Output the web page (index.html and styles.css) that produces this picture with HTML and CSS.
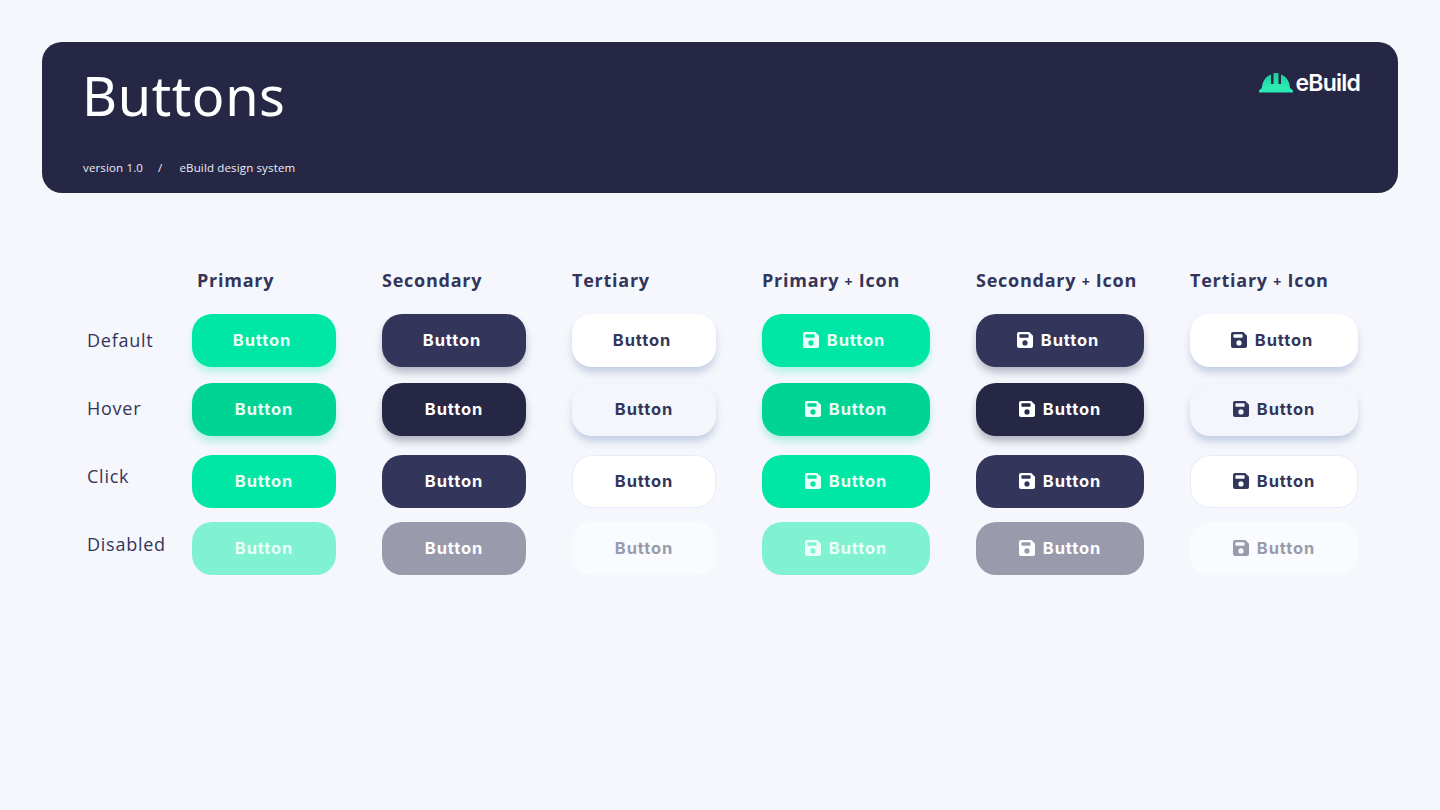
FILE: index.html
```html
<!DOCTYPE html>
<html lang="en">
<head>
<meta charset="utf-8">
<title>Buttons</title>
<link rel="stylesheet" href="styles.css">
</head>
<body>
<svg class="sprite" width="0" height="0" aria-hidden="true">
  <symbol id="save" viewBox="0 0 16 16">
    <path fill-rule="evenodd" d="M2 0H12.2L16 3.8V14a2 2 0 0 1-2 2H2a2 2 0 0 1-2-2V2a2 2 0 0 1 2-2ZM3.2 2.2a.8.8 0 0 0-.8.8V5a.8.8 0 0 0 .8.8H10.8a.8.8 0 0 0 .8-.8V3a.8.8 0 0 0-.8-.8ZM8 8.3a2.6 2.6 0 1 0 0 5.2a2.6 2.6 0 0 0 0-5.2Z"/>
  </symbol>
</svg>
<header class="banner">
  <div class="banner-main">
    <h1 class="title">Buttons</h1>
    <p class="crumbs"><span>version 1.0</span><span class="slash">/</span><span>eBuild design system</span></p>
  </div>
  <div class="logo">
    <svg class="logo-mark" viewBox="0 0 34 20" width="34" height="20" aria-hidden="true">
      <defs><linearGradient id="hat" x1="0" y1="0" x2="0" y2="1"><stop offset="0" stop-color="#1bc9a0"/><stop offset="1" stop-color="#2eeeb5"/></linearGradient></defs>
      <path fill="url(#hat)" d="M3 15.500C3 9 6.500 3.500 12 1.500V11H14.500V.2L15.500 0H18.500L19.500 .2V11H22V1.500C27.500 3.500 31 9 31 15.500Z"/>
      <path fill="#2ce8b2" d="M3 15H31L33.500 17A1.300 1.300 0 0 1 32.700 19.500H1.300A1.300 1.300 0 0 1 .5 17Z"/>
    </svg>
    <span class="logo-text">eBuild</span>
  </div>
</header>
<main class="matrix">
  <div class="states">
    <div>Default</div>
    <div>Hover</div>
    <div>Click</div>
    <div>Disabled</div>
  </div>
  <section class="col">
    <h2 class="col-title col-title-first">Primary</h2>
    <button class="btn primary s-default">Button</button>
    <button class="btn primary s-hover">Button</button>
    <button class="btn primary s-click">Button</button>
    <button class="btn primary s-disabled">Button</button>
  </section>
  <section class="col">
    <h2 class="col-title">Secondary</h2>
    <button class="btn secondary s-default">Button</button>
    <button class="btn secondary s-hover">Button</button>
    <button class="btn secondary s-click">Button</button>
    <button class="btn secondary s-disabled">Button</button>
  </section>
  <section class="col">
    <h2 class="col-title">Tertiary</h2>
    <button class="btn tertiary s-default">Button</button>
    <button class="btn tertiary s-hover">Button</button>
    <button class="btn tertiary s-click">Button</button>
    <button class="btn tertiary s-disabled">Button</button>
  </section>
  <section class="col wide">
    <h2 class="col-title">Primary <small>+</small> Icon</h2>
    <button class="btn primary s-default"><svg class="ico"><use href="#save"/></svg>Button</button>
    <button class="btn primary s-hover"><svg class="ico"><use href="#save"/></svg>Button</button>
    <button class="btn primary s-click"><svg class="ico"><use href="#save"/></svg>Button</button>
    <button class="btn primary s-disabled"><svg class="ico"><use href="#save"/></svg>Button</button>
  </section>
  <section class="col wide">
    <h2 class="col-title">Secondary <small>+</small> Icon</h2>
    <button class="btn secondary s-default"><svg class="ico"><use href="#save"/></svg>Button</button>
    <button class="btn secondary s-hover"><svg class="ico"><use href="#save"/></svg>Button</button>
    <button class="btn secondary s-click"><svg class="ico"><use href="#save"/></svg>Button</button>
    <button class="btn secondary s-disabled"><svg class="ico"><use href="#save"/></svg>Button</button>
  </section>
  <section class="col wide">
    <h2 class="col-title">Tertiary <small>+</small> Icon</h2>
    <button class="btn tertiary s-default"><svg class="ico"><use href="#save"/></svg>Button</button>
    <button class="btn tertiary s-hover"><svg class="ico"><use href="#save"/></svg>Button</button>
    <button class="btn tertiary s-click"><svg class="ico"><use href="#save"/></svg>Button</button>
    <button class="btn tertiary s-disabled"><svg class="ico"><use href="#save"/></svg>Button</button>
  </section>
</main>
</body>
</html>
```
FILE: styles.css
```css
* { box-sizing: border-box; }
html, body { margin: 0; height: 100%; overflow: hidden; }
body {
  background: #f5f7fc;
  padding: 42px 42px 0;
  font-family: "Open Sans", "Noto Sans", sans-serif;
  color: #33355a;
}
.sprite { position: absolute; }
.banner {
  height: 151px;
  background: #252745;
  border-radius: 20px;
  color: #fff;
  padding: 0 38px 0 40px;
  display: flex;
  justify-content: space-between;
  align-items: flex-start;
}
.banner-main { display: flex; flex-direction: column; }
.title {
  margin: 19px 0 0;
  font-family: "Noto Sans", sans-serif;
  font-size: 54px;
  line-height: 68px;
  font-weight: 400;
  letter-spacing: .6px;
}
.crumbs {
  margin: 31px 0 0 1px;
  font-size: 11.500px;
  line-height: 16px;
  letter-spacing: .15px;
  display: flex;
  color: #eceef6;
}
.slash { margin: 0 17px 0 15px; }
.logo { display: flex; align-items: flex-end; margin-top: 31px; gap: 3px; }
.logo-mark { display: block; }
.logo-text {
  font-family: Inter, sans-serif;
  font-size: 23px;
  line-height: 20px;
  font-weight: 600;
  letter-spacing: -.8px;
}
.matrix { display: flex; margin-top: 75px; padding-left: 45px; }
.states {
  width: 105px;
  padding-top: 60px;
  font-size: 18px;
  line-height: 24px;
  letter-spacing: .75px;
  display: flex;
  flex-direction: column;
  gap: 44px;
  flex: none;
}
.col { width: 144px; margin-right: 46px; display: flex; flex-direction: column; flex: none; }
.col.wide { width: 168px; }
.col-title {
  margin: 0 0 22px;
  height: 24px;
  font-size: 18px;
  line-height: 24px;
  font-weight: 700;
  letter-spacing: .75px;
  white-space: nowrap;
}
.col-title small { font-size: 14px; }
.col-title-first { padding-left: 5px; }
.btn {
  height: 53px;
  border: 0;
  border-radius: 20px;
  padding: 0 0 1px;
  font-family: Inter, sans-serif;
  font-size: 16.500px;
  font-weight: 700;
  letter-spacing: .9px;
  display: flex;
  align-items: center;
  justify-content: center;
  gap: 8px;
  width: 100%;
}
.ico { width: 16px; height: 16px; fill: currentColor; flex: none; }
.s-default { padding-right: 4px; }
.s-hover { margin-top: 16px; }
.s-click { margin-top: 19px; }
.s-disabled { margin-top: 14px; }
.primary { background: #00e6a4; color: #e9fff8; }
.primary.s-default { box-shadow: 0 6px 8px -1px rgba(0, 230, 164, .28); }
.primary.s-hover { background: #00d494; box-shadow: 0 6px 8px -1px rgba(0, 212, 148, .3); }
.primary.s-disabled { background: #80f2d1; }
.secondary { background: #33355a; color: #fff; }
.secondary.s-default { box-shadow: 0 6px 8px -1px rgba(51, 53, 90, .35); }
.secondary.s-hover { background: #252745; box-shadow: 0 6px 8px -1px rgba(37, 39, 69, .35); }
.secondary.s-disabled { background: #999bad; }
.tertiary { background: #fff; color: #33355a; }
.tertiary.s-default { box-shadow: 0 6px 8px -1px rgba(120, 140, 185, .42); }
.tertiary.s-hover { background: #f4f6fc; box-shadow: 0 6px 8px -1px rgba(120, 140, 185, .42); }
.tertiary.s-click { box-shadow: inset 0 0 0 1px #e6eafa; }
.tertiary.s-disabled { background: #fafbfe; color: #999bad; }
```
